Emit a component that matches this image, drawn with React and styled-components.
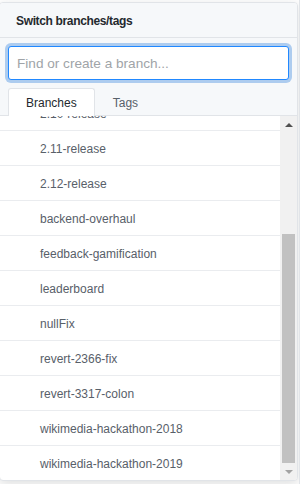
import React, { useEffect, useRef } from "react";
import styled, { createGlobalStyle } from "styled-components";

const GlobalStyle = createGlobalStyle`
  html, body { margin: 0; padding: 0; background: #ffffff; }
  body { font-family: "Liberation Sans", Arial, sans-serif; overflow: hidden; }
  * { box-sizing: border-box; }
`;

const Page = styled.div`
  display: flex;
  align-items: flex-start;
  width: 301px;
  height: 484px;
  overflow: hidden;
`;

const Panel = styled.div`
  flex: none;
  width: 299px;
  margin: 2px 0 0 -1px;
  border: 1px solid #e1e4e8;
  border-radius: 4px;
  overflow: hidden;
  background: #ffffff;
  box-shadow: 0 3px 12px rgba(27, 31, 35, 0.15);
  display: flex;
  flex-direction: column;
`;

const PageEdge = styled.div`
  flex: 1;
  align-self: stretch;
  margin-left: 1px;
  border-left: 1px solid #e1e4e8;
  background: #ffffff;
`;

const Header = styled.div`
  height: 35px;
  display: flex;
  align-items: center;
  padding: 1px 16px 0;
  background: #f6f8fa;
  border-bottom: 1px solid #e1e4e8;
  font-size: 12px;
  font-weight: 700;
  color: #24292e;
  letter-spacing: -0.35px;
`;

const Filter = styled.div`
  padding: 8px;
  background: #f6f8fa;
`;

const Input = styled.input`
  display: block;
  width: 100%;
  height: 34px;
  padding: 0 8px;
  font-family: "Liberation Sans", Arial, sans-serif;
  font-size: 13.6px;
  color: #24292e;
  background: #ffffff;
  border: 1px solid #2188ff;
  border-radius: 3px;
  outline: none;
  box-shadow: 0 0 0 3px rgba(3, 102, 214, 0.3);
  &::placeholder { color: #a0a4a8; }
`;

const Tabs = styled.div`
  display: flex;
  height: 28px;
  padding: 0 8px;
  background: #f6f8fa;
  border-bottom: 1px solid #e1e4e8;
`;

const Tab = styled.div`
  display: flex;
  align-items: center;
  height: 28px;
  padding: 1px 17px 0;
  font-size: 12px;
  color: ${(p) => (p.$selected ? "#24292e" : "#586069")};
  background: ${(p) => (p.$selected ? "#ffffff" : "transparent")};
  border: 1px solid ${(p) => (p.$selected ? "#e1e4e8" : "transparent")};
  border-bottom: none;
  border-radius: 3px 3px 0 0;
  margin-bottom: -1px;
`;

const ListArea = styled.div`
  display: flex;
  height: 364px;
`;

const Items = styled.div`
  flex: 1;
  overflow: hidden;
  height: 364px;
`;

const Item = styled.div`
  height: 35px;
  display: flex;
  align-items: center;
  padding: 2px 0 0 40px;
  font-size: 12px;
  color: #586069;
  border-bottom: 1px solid #eaecef;
  &:last-child { border-bottom: none; height: 34px; }
`;

const Scrollbar = styled.div`
  flex: none;
  width: 17px;
  display: flex;
  flex-direction: column;
  background: #f1f1f1;
`;

const ScrollButton = styled.div`
  flex: none;
  height: 17px;
  display: flex;
  align-items: center;
  justify-content: center;
`;

const Track = styled.div`
  flex: 1;
  display: flex;
  flex-direction: column;
  justify-content: flex-end;
  padding: 0 2px;
`;

const Thumb = styled.div`
  background: #c1c1c1;
`;

const Arrow = ({ up, color }) => (
  <svg width="8" height="4" viewBox="0 0 8 4">
    {up ? (
      <polygon points="0,4 8,4 4,0" fill={color} />
    ) : (
      <polygon points="0,0 8,0 4,4" fill={color} />
    )}
  </svg>
);

const branches = [
  "master",
  "2.7-release",
  "2.8-release",
  "2.9-release",
  "2.10-release",
  "2.11-release",
  "2.12-release",
  "backend-overhaul",
  "feedback-gamification",
  "leaderboard",
  "nullFix",
  "revert-2366-fix",
  "revert-3317-colon",
  "wikimedia-hackathon-2018",
  "wikimedia-hackathon-2019",
];

const VISIBLE = 364;
const CONTENT = (branches.length - 1) * 35 + 34;
const TRACK = VISIBLE - 34;

export default function App() {
  const ref = useRef(null);
  useEffect(() => {
    if (ref.current) ref.current.scrollTop = ref.current.scrollHeight;
  }, []);
  const thumbH = Math.round((TRACK * VISIBLE) / CONTENT);
  return (
    <>
      <GlobalStyle />
      <Page>
        <Panel>
          <Header>Switch branches/tags</Header>
          <Filter>
            <Input type="text" placeholder="Find or create a branch..." />
          </Filter>
          <Tabs>
            <Tab $selected>Branches</Tab>
            <Tab>Tags</Tab>
          </Tabs>
          <ListArea>
            <Items ref={ref}>
              {branches.map((b) => (
                <Item key={b}>{b}</Item>
              ))}
            </Items>
            <Scrollbar>
              <ScrollButton>
                <Arrow up color="#505050" />
              </ScrollButton>
              <Track>
                <Thumb style={{ height: thumbH }} />
              </Track>
              <ScrollButton>
                <Arrow color="#a3a3a3" />
              </ScrollButton>
            </Scrollbar>
          </ListArea>
        </Panel>
        <PageEdge />
      </Page>
    </>
  );
}
